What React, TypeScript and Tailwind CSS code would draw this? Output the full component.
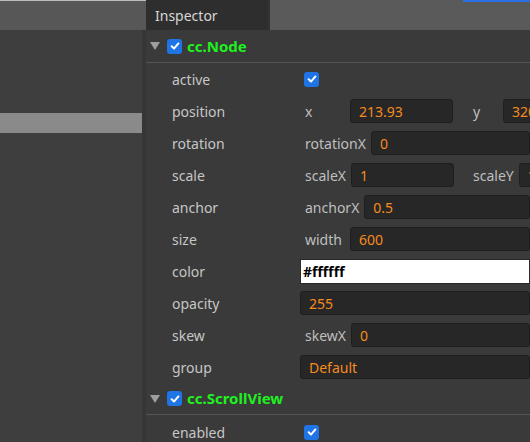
import type { ReactNode } from 'react'

const Check = ({ className = '' }: { className?: string }) => (
  <span className={`flex h-[15px] w-[15px] items-center justify-center rounded-[3px] bg-[#1f74e6] ${className}`}>
    <svg viewBox="0 0 14 14" className="h-[12px] w-[12px]">
      <path d="M3 7.2 L5.8 10 L11 4" fill="none" stroke="#ffffff" strokeWidth="2.3" strokeLinecap="round" strokeLinejoin="round" />
    </svg>
  </span>
)

const Input = ({ value, className = '' }: { value: string; className?: string }) => (
  <div
    className={`flex h-[24px] shrink-0 items-center rounded-[3px] border border-[#1e1e1e] bg-[#272727] pl-[8px] text-[14px] text-[#f68b1f] ${className}`}
  >
    {value}
  </div>
)

const Sub = ({ children, className = 'min-w-[40px]' }: { children: ReactNode; className?: string }) => (
  <span className={`mr-[5px] shrink-0 text-[14px] text-[#bfbfbf] ${className}`}>{children}</span>
)

const Row = ({ label, children }: { label: string; children: ReactNode }) => (
  <div className="flex h-[32px] items-center">
    <div className="w-[154px] shrink-0 pl-[26px] text-[14px] text-[#c6c6c6]">{label}</div>
    <div className="flex min-w-0 flex-1 items-center overflow-hidden">{children}</div>
  </div>
)

const Header = ({ name, height }: { name: string; height: string }) => (
  <div className={`flex ${height} items-center border-b border-[#565656] pl-[4px]`}>
    <svg viewBox="0 0 10 8" className="h-[8px] w-[10px]">
      <path d="M0 0 H10 L5 8 Z" fill="#9e9e9e" />
    </svg>
    <Check className="ml-[7px]" />
    <span className="ml-[5px] text-[15px] font-bold text-[#1ff01f]">{name}</span>
  </div>
)

export default function App() {
  return (
    <div
      className="flex h-[442px] w-[530px] overflow-hidden bg-[#3a3a3a]"
      style={{ fontFamily: '"Noto Sans", "Open Sans", sans-serif' }}
    >
      <div className="flex w-[146px] shrink-0 flex-col">
        <div className="h-[30px] shrink-0 border-t border-[#bdbdbd] bg-[#575757]" />
        <div className="flex-1 border-r-[4px] border-[#363636] bg-[#3e3e3e] pt-[83px]">
          <div className="h-[20px] bg-[#8a8a8a]" />
        </div>
      </div>

      <div className="min-w-0 flex-1">
        <div className="flex h-[30px]">
          <div className="flex w-[122px] items-center bg-[#2e2e2e] pl-[9px] text-[14px] text-[#d6d6d6]">Inspector</div>
          <div className="flex-1 border-l-[2px] border-[#333333] bg-[#5a5a5a] pl-[193px]">
            <div className="h-[2px] bg-[#2b6fe3]" />
          </div>
        </div>

        <Header name="cc.Node" height="h-[33px]" />
        <Row label="active">
          <Check className="ml-[4px]" />
        </Row>
        <Row label="position">
          <div className="flex w-[173px] shrink-0 items-center pl-[5px]">
            <Sub>x</Sub>
            <Input value="213.93" className="w-[103px]" />
          </div>
          <Sub className="min-w-[25px]">y</Sub>
          <Input value="320" className="w-[103px]" />
        </Row>
        <Row label="rotation">
          <div className="flex flex-1 items-center pl-[5px]">
            <Sub>rotationX</Sub>
            <Input value="0" className="flex-1" />
          </div>
        </Row>
        <Row label="scale">
          <div className="flex w-[173px] shrink-0 items-center pl-[5px]">
            <Sub>scaleX</Sub>
            <Input value="1" className="w-[103px]" />
          </div>
          <Sub className="min-w-[25px]">scaleY</Sub>
          <Input value="1" className="w-[103px]" />
        </Row>
        <Row label="anchor">
          <div className="flex flex-1 items-center pl-[5px]">
            <Sub>anchorX</Sub>
            <Input value="0.5" className="flex-1" />
          </div>
        </Row>
        <Row label="size">
          <div className="flex flex-1 items-center pl-[5px]">
            <Sub>width</Sub>
            <Input value="600" className="flex-1" />
          </div>
        </Row>
        <Row label="color">
          <div className="flex h-[25px] flex-1 items-center border border-[#2a2a2a] bg-white pl-[2px] text-[14px] font-bold text-black">
            #ffffff
          </div>
        </Row>
        <Row label="opacity">
          <Input value="255" className="flex-1" />
        </Row>
        <Row label="skew">
          <div className="flex flex-1 items-center pl-[5px]">
            <Sub>skewX</Sub>
            <Input value="0" className="flex-1" />
          </div>
        </Row>
        <Row label="group">
          <Input value="Default" className="flex-1" />
        </Row>

        <Header name="cc.ScrollView" height="h-[32px]" />
        <div className="pt-[1px]">
          <Row label="enabled">
            <Check className="ml-[4px]" />
          </Row>
        </div>
      </div>
    </div>
  )
}
